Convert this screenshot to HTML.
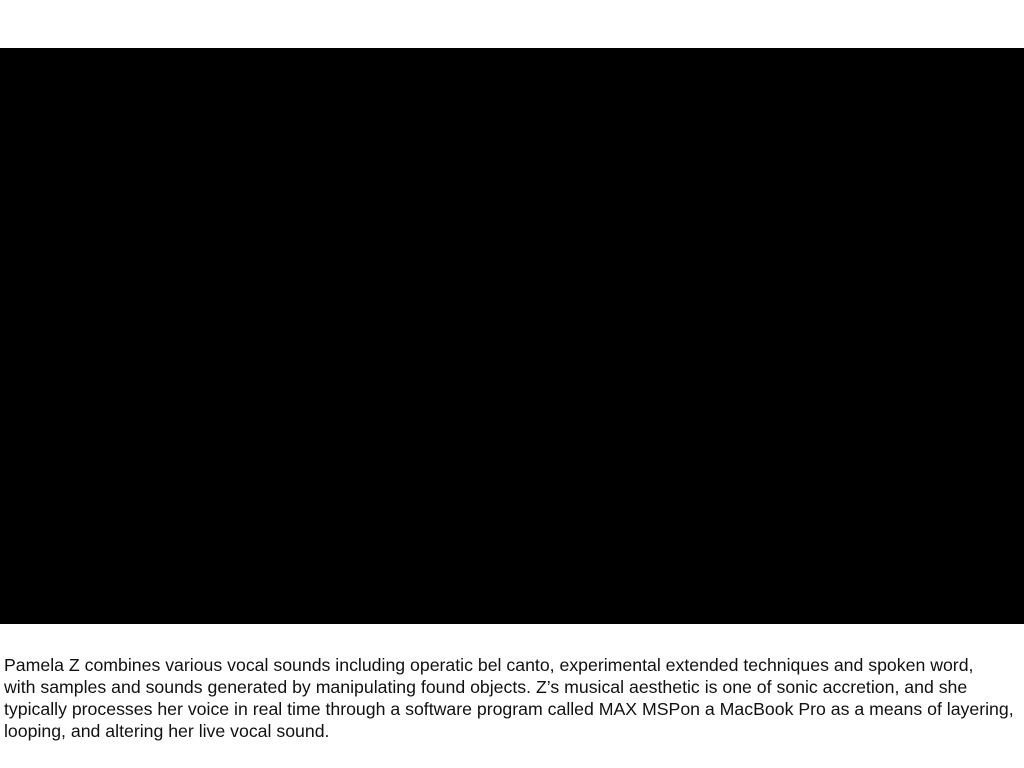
<!DOCTYPE html>
<html><head><meta charset="utf-8"><style>
html,body{margin:0;padding:0;background:#fff;width:1024px;height:768px;overflow:hidden}
.v{position:absolute;left:0;top:48px;width:1024px;height:576px;background:#000}
p{position:absolute;left:4px;top:654px;width:1020px;margin:0;font-family:"Liberation Sans",sans-serif;font-size:17.7px;line-height:22px;color:#111;white-space:nowrap}
</style></head><body>
<div class="v"></div>
<p>Pamela Z combines various vocal sounds including operatic bel canto, experimental extended techniques and spoken word,<br>with samples and sounds generated by manipulating found objects. Z’s musical aesthetic is one of sonic accretion, and she<br>typically processes her voice in real time through a software program called MAX MSPon a MacBook Pro as a means of layering,<br>looping, and altering her live vocal sound.</p>
</body></html>
